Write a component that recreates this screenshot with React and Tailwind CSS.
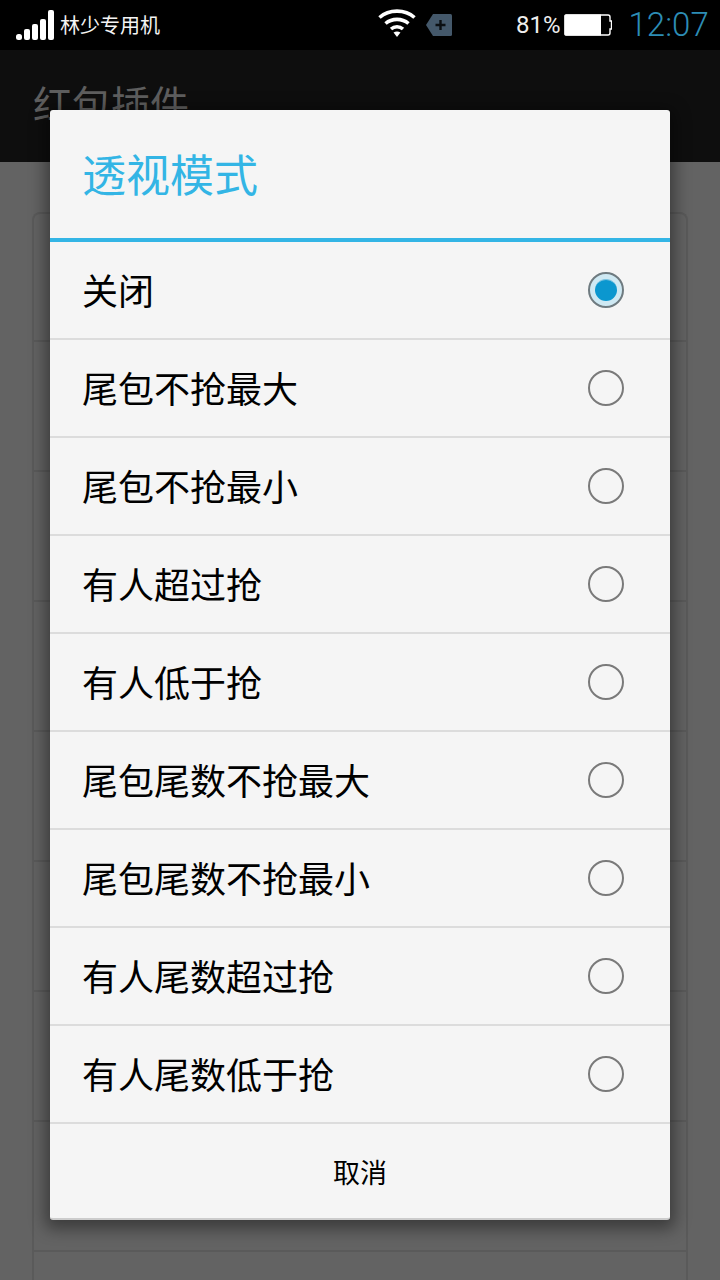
const items = ["关闭","尾包不抢最大","尾包不抢最小","有人超过抢","有人低于抢","尾包尾数不抢最大","尾包尾数不抢最小","有人尾数超过抢","有人尾数低于抢"];
const cjk = "font-['Roboto','Noto_Sans_CJK_SC',sans-serif]";

function Signal() {
  return (
    <svg width="40" height="31" viewBox="0 0 40 31" fill="#fff">
      <rect x="0" y="24" width="6" height="6" rx="2.5" />
      <rect x="8" y="19" width="6" height="11" rx="2" />
      <rect x="16" y="14" width="6" height="16" rx="2" />
      <rect x="24" y="9" width="6" height="21" rx="2" />
      <rect x="32" y="0" width="6" height="30" rx="2" />
    </svg>
  );
}

function Wifi() {
  return (
    <svg width="38" height="30" viewBox="0 0 38 30" fill="none" stroke="#fff" strokeWidth="3.6">
      <path d="M1.5 9.5C11 1 27 1 36.5 9.5" />
      <path d="M7.5 15.5C14 10 24 10 30.5 15.5" />
      <path d="M13 21C16.5 18 21.500 18 25 21" />
      <path d="M15.500 24.500 L19 29 L22.500 24.500 Q19 22.500 15.500 24.500Z" fill="#fff" stroke="none" />
    </svg>
  );
}

function Tag() {
  return (
    <svg width="28" height="24" viewBox="0 0 28 24">
      <path d="M8 1H25.500Q27 1 27 2.500V21.500Q27 23 25.500 23H8L1 12Z" fill="#44586a" />
      <path d="M10.500 12H20.500M15.500 7V17" stroke="#0b0f12" strokeWidth="2.400" />
    </svg>
  );
}

function Battery() {
  return (
    <svg width="48" height="22" viewBox="0 0 48 22">
      <path d="M2 1H44Q46 1 46 3V7H47.500V15H46V19Q46 21 44 21H2Q1 21 1 20V2Q1 1 2 1Z" fill="#000" stroke="#fff" strokeWidth="1.400" />
      <path d="M2 0.500H37V21.500H2Q0.500 21.500 0.500 20V2Q0.500 0.500 2 0.500Z" fill="#fff" />
    </svg>
  );
}

function Radio({ on }) {
  if (on) {
    return (
      <div className="w-[36px] h-[36px] rounded-full border-2 border-[#6f7b80] bg-[#cfe9f3] flex items-center justify-center">
        <div className="w-[22px] h-[22px] rounded-full bg-[#0b97cf] border-t border-[#7cc4e2]" />
      </div>
    );
  }
  return <div className="w-[36px] h-[36px] rounded-full border-2 border-[#7a7a7a]" />;
}

export default function App() {
  return (
    <div className={`relative w-[720px] h-[1280px] overflow-hidden bg-[#636363] ${cjk}`}>
      <div className="h-[50px] bg-black flex items-center text-white">
        <div className="ml-[16px] flex"><Signal /></div>
        <span className="ml-[4px] mt-[2px] text-[20px] leading-[26px] text-[#f4f4f4]">林少专用机</span>
        <div className="ml-[218px] mt-[-4px] flex"><Wifi /></div>
        <div className="ml-[9px] mt-[-1px] flex"><Tag /></div>
        <span className="ml-[63px] text-[24px] leading-[30px] text-[#eeeeee]">81%</span>
        <div className="ml-[3px] mt-[-1px] flex"><Battery /></div>
        <span className="ml-[17px] text-[33px] leading-[36px] font-light text-[#2d8db5]">12:07</span>
      </div>
      <div className="h-[112px] bg-[#0e0e0e] pl-[33px] pt-[29px]">
        <span className="text-[39px] leading-[54px] text-[#5e5e5e]">红包插件</span>
      </div>
      <div className="px-[32px] pt-[50px]">
        <div className="rounded-t-lg border-2 border-b-0 border-[#5a5a5a] flex flex-col">
          {[0,1,2,3,4,5,6,7,8].map((i) => (
            <div key={i} className={i === 0 ? "h-[128px] shrink-0 border-b-2 border-[#5a5a5a]" : "h-[130px] shrink-0 border-b-2 border-[#5a5a5a]"} />
          ))}
        </div>
      </div>

      <div className="absolute left-[50px] top-[110px] w-[620px] h-[1110px] rounded-[3px] bg-[#f5f5f5] shadow-[0_4px_16px_5px_rgba(0,0,0,0.4)] flex flex-col border-b-2 border-[#cccccc]">
        <div className="h-[128px] shrink-0 pl-[32px] flex items-center">
          <span className="mt-[6px] text-[44px] leading-[56px] text-[#33b5e5]">透视模式</span>
        </div>
        <div className="h-[4px] shrink-0 bg-[#33b5e5]" />
        {items.map((t, i) => (
          <div key={t} className="h-[98px] shrink-0 pl-[32px] pr-[46px] flex items-center justify-between border-b-2 border-[#dcdcdc] text-[36px] text-black">
            <span className="mt-[6px] leading-[48px]">{t}</span>
            <Radio on={i === 0} />
          </div>
        ))}
        <div className="flex-1 flex items-center justify-center text-[27px] text-black">
          <span className="mt-[6px]">取消</span>
        </div>
      </div>
    </div>
  );
}
